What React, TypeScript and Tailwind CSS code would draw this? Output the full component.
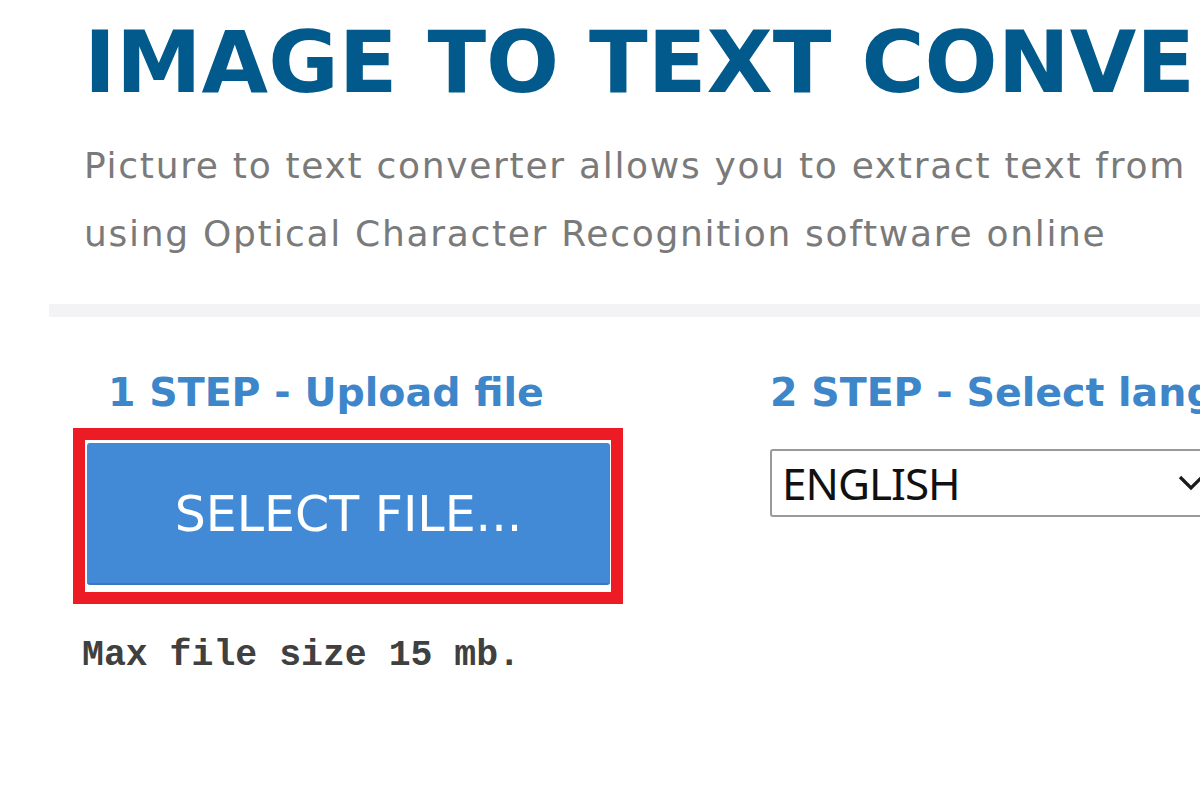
import React from "react";

export default function App() {
  return (
    <div className="relative w-[1200px] h-[800px] overflow-hidden bg-white">
      <div className="pl-[84px] pt-[12px]">
        <h1
          className="whitespace-nowrap text-[86px] font-bold leading-[100px] text-[#02598b]"
          style={{ fontFamily: '"DejaVu Sans", Verdana, sans-serif' }}
        >
          IMAGE TO TEXT CONVERTER
        </h1>
        <p
          className="mt-[20px] whitespace-nowrap text-[36px] leading-[68px] tracking-[1.7px] text-[#7a7a7a]"
          style={{ fontFamily: '"DejaVu Sans", Verdana, sans-serif' }}
        >
          Picture to text converter allows you to extract text from
          <br />
          using Optical Character Recognition software online
        </p>
      </div>
      <div className="ml-[49px] mt-[36px] h-[13px] bg-[#f3f3f5]" />
      <div className="flex pt-[52px]">
        <div className="ml-[73px] w-[550px] shrink-0">
          <h2
            className="pl-[35px] whitespace-nowrap text-[39.5px] font-bold leading-[46px] text-[#3d86c9]"
            style={{ fontFamily: '"DejaVu Sans", Verdana, sans-serif' }}
          >
            1 STEP - Upload file
          </h2>
          <div className="mt-[13px] border-[12px] border-[#ed1c24] bg-white pt-[3px] pl-[2px] pr-[1px] pb-[7px]">
            <button
              className="flex h-[142px] w-full items-center justify-center rounded-[3px] border-b-[2px] border-[#3a78bd] bg-[#438ad6] pt-[4px] text-[49px] text-white"
              style={{ fontFamily: '"DejaVu Sans", Verdana, sans-serif' }}
            >
              SELECT FILE...
            </button>
          </div>
          <p
            className="mt-[32px] pl-[9px] whitespace-nowrap text-[36.5px] font-bold leading-[40px] text-[#404040]"
            style={{ fontFamily: '"Liberation Mono", "Courier New", monospace' }}
          >
            Max file size 15 mb.
          </p>
        </div>
        <div className="ml-[147px] shrink-0">
          <h2
            className="whitespace-nowrap text-[39.5px] font-bold leading-[46px] text-[#3d86c9]"
            style={{ fontFamily: '"DejaVu Sans", Verdana, sans-serif' }}
          >
            2 STEP - Select language
          </h2>
          <div className="mt-[34px] flex h-[68px] w-[450px] items-center justify-between rounded-[3px] border-2 border-[#9a9a9a] bg-white pl-[10px] pr-[14px]">
            <span
              className="text-[44px] leading-none tracking-[-1px] text-[#111]"
              style={{ fontFamily: '"Noto Sans", "Open Sans", sans-serif' }}
            >
              ENGLISH
            </span>
            <svg width="26" height="16" viewBox="0 0 26 16" className="shrink-0">
              <polyline points="2,2 13,13 24,2" fill="none" stroke="#1a1a1a" strokeWidth="3.2" />
            </svg>
          </div>
        </div>
      </div>
    </div>
  );
}
